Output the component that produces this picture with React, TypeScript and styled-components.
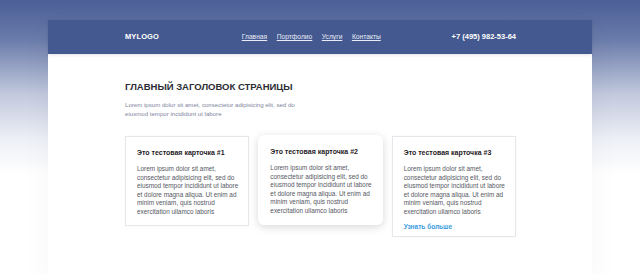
import { createGlobalStyle } from 'styled-components';
import styled from 'styled-components';

const GlobalStyle = createGlobalStyle`
  html, body {
    margin: 0;
    padding: 0;
  }
  body {
    min-height: 274px;
    font-family: "Liberation Sans", Arial, sans-serif;
    background: linear-gradient(180deg, #4b5e96 0px, #6a7caa 40px, #c3cade 95px, #eef0f6 140px, #ffffff 175px);
    overflow: hidden;
  }
`;

const cards = [
  { title: 'Это тестовая карточка #1', active: false, more: false },
  { title: 'Это тестовая карточка #2', active: true, more: false },
  { title: 'Это тестовая карточка #3', active: false, more: true },
];

const App = (): JSX.Element => {
  return (
    <>
      <GlobalStyle />
      <Page>
        <Header>
          <Logo>MYLOGO</Logo>
          <Menu>
            <MenuLink href='#'>Главная</MenuLink>
            <MenuLink href='#'>Портфолио</MenuLink>
            <MenuLink href='#'>Услуги</MenuLink>
            <MenuLink href='#'>Контакты</MenuLink>
          </Menu>
          <Phone>+7 (495) 982-53-64</Phone>
        </Header>
        <Main>
          <Title>Главный заголовок страницы</Title>
          <Lead>
            Lorem ipsum dolor sit amet, consectetur adipisicing elit, sed do
            eiusmod tempor incididunt ut labore
          </Lead>
          <Cards>
            {cards.map((c) => (
              <Card key={c.title} $active={c.active}>
                <CardTitle>{c.title}</CardTitle>
                <CardText>
                  Lorem ipsum dolor sit amet, consectetur adipisicing elit, sed do
                  eiusmod tempor incididunt ut labore et dolore magna aliqua. Ut enim
                  ad minim veniam, quis nostrud exercitation ullamco laboris
                </CardText>
                {c.more && <More href='#'>Узнать больше</More>}
              </Card>
            ))}
          </Cards>
        </Main>
      </Page>
    </>
  );
};

const Page = styled.div`
  width: 544px;
  margin: 20px auto 0;
  background: #fff;
  min-height: 254px;
  box-shadow: 0 10px 30px rgba(0, 0, 0, 0.04);
`;

const Header = styled.header`
  height: 34px;
  background: #44598f;
  display: flex;
  align-items: center;
  justify-content: space-between;
  padding: 0 76px 0 77px;
  box-shadow: 0 1px 3px rgba(0, 0, 0, 0.12);
  position: relative;
`;

const Logo = styled.div`
  color: #fff;
  font-weight: bold;
  font-size: 7.5px;
  letter-spacing: 0.1px;
  margin-top: -2px;
`;

const Menu = styled.nav`
  display: flex;
  gap: 9.5px;
  margin-left: 12px;
  margin-top: -1px;
`;

const MenuLink = styled.a`
  color: #e8ecf6;
  font-size: 6.7px;
  text-decoration: underline;
`;

const Phone = styled.div`
  color: #fff;
  font-weight: bold;
  font-size: 7.5px;
  margin-top: -2px;
`;

const Main = styled.main`
  padding: 27px 76px 30px 77px;
`;

const Title = styled.h1`
  margin: 0;
  font-size: 9.5px;
  line-height: 12px;
  font-weight: bold;
  text-transform: uppercase;
  color: #2b2d33;
`;

const Lead = styled.p`
  margin: 7px 0 0;
  width: 175px;
  font-size: 6.1px;
  line-height: 9px;
  color: #80869e;
`;

const Cards = styled.div`
  margin-top: 18px;
  display: grid;
  grid-template-columns: repeat(3, 1fr);
  gap: 9px;
  align-items: start;
`;

const Card = styled.div<{ $active: boolean }>`
  background: #fff;
  padding: 11px 7px 8px 11px;
  border: 1px solid ${(p) => (p.$active ? 'transparent' : '#e6e7ea')};
  border-radius: ${(p) => (p.$active ? '6px' : '0')};
  box-shadow: ${(p) =>
    p.$active ? '0 2px 8px rgba(0, 0, 0, 0.16)' : '0 0 2px rgba(0, 0, 0, 0.04)'};
  transform: ${(p) => (p.$active ? 'translateY(-1px)' : 'none')};
`;

const CardTitle = styled.h3`
  margin: 0;
  font-size: 7px;
  line-height: 10px;
  font-weight: bold;
  color: #1f2024;
`;

const CardText = styled.p`
  margin: 7px 0 0;
  font-size: 6.4px;
  line-height: 8.6px;
  color: #55585f;
`;

const More = styled.a`
  display: block;
  margin-top: 6px;
  margin-bottom: -2px;
  font-size: 6.5px;
  font-weight: bold;
  color: #3a9be0;
  text-decoration: none;
`;

export default App;
